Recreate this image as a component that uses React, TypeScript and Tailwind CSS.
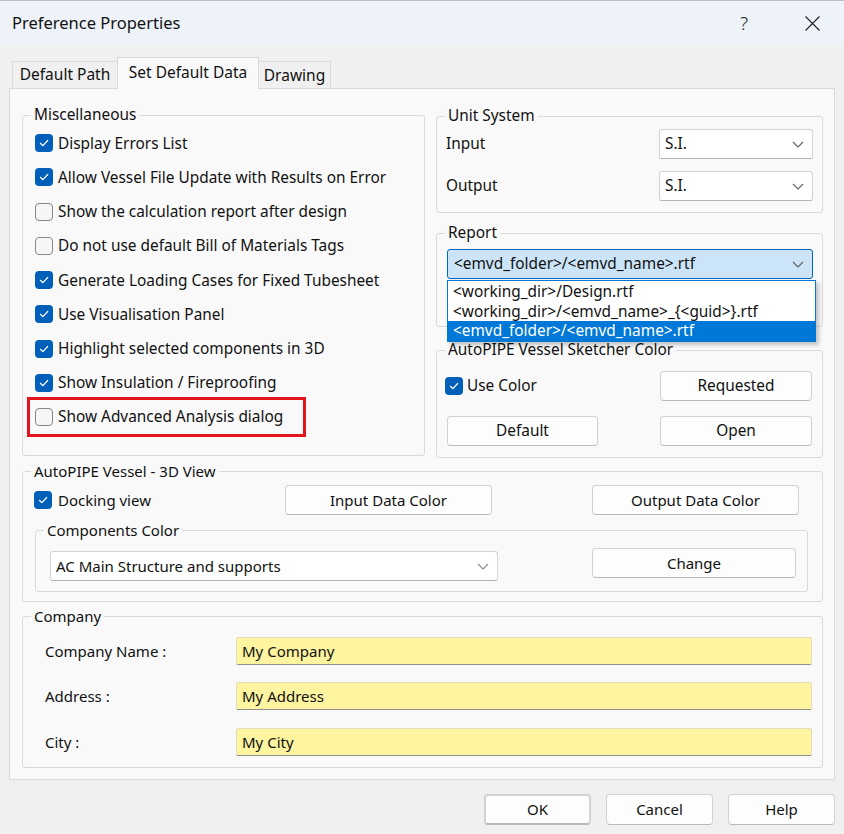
import React from "react"
import clsx from "clsx"

const MISC_OPTIONS: { label: string; checked: boolean }[] = [
  { label: "Display Errors List", checked: true },
  { label: "Allow Vessel File Update with Results on Error", checked: true },
  { label: "Show the calculation report after design", checked: false },
  { label: "Do not use default Bill of Materials Tags", checked: false },
  { label: "Generate Loading Cases for Fixed Tubesheet", checked: true },
  { label: "Use Visualisation Panel", checked: true },
  { label: "Highlight selected components in 3D", checked: true },
  { label: "Show Insulation / Fireproofing", checked: true },
]

const REPORT_OPTIONS = [
  "<working_dir>/Design.rtf",
  "<working_dir>/<emvd_name>_{<guid>}.rtf",
  "<emvd_folder>/<emvd_name>.rtf",
]

function Checkbox({ checked }: { checked: boolean }) {
  if (checked) {
    return (
      <span className="flex h-[18px] w-[18px] shrink-0 items-center justify-center rounded-[4px] bg-[#005fb8]">
        <svg width="12" height="12" viewBox="0 0 12 12">
          <path
            d="M2.4 6.3 L4.9 8.7 L9.7 3.5"
            fill="none"
            stroke="white"
            strokeWidth="1.2"
            strokeLinecap="round"
            strokeLinejoin="round"
          />
        </svg>
      </span>
    )
  }
  return <span className="h-[18px] w-[18px] shrink-0 rounded-[4px] border border-[#878787] bg-[#f6f6f6]" />
}

function Chevron({ color = "#5f5f5f" }: { color?: string }) {
  return (
    <svg width="12" height="7" viewBox="0 0 12 7" className="shrink-0">
      <polyline points="1,1 6,6 11,1" fill="none" stroke={color} strokeWidth="1.1" />
    </svg>
  )
}

function Group({
  label,
  className,
  children,
}: {
  label: string
  className?: string
  children?: React.ReactNode
}) {
  return (
    <fieldset className={clsx("rounded-[3px] border border-[#dadada]", className)}>
      <legend className="ml-[8px] px-[3px] leading-[20px]">{label}</legend>
      {children}
    </fieldset>
  )
}

function Select({ value, className, chevron }: { value: string; className?: string; chevron?: string }) {
  return (
    <div
      className={clsx(
        "flex items-center justify-between rounded-[3px] border border-[#d3d3d3] border-b-[#b3b3b3] bg-white pl-[5px] pr-[8px]",
        className
      )}
    >
      <span>{value}</span>
      <Chevron color={chevron} />
    </div>
  )
}

function Btn({ children, className }: { children: React.ReactNode; className?: string }) {
  return (
    <button
      className={clsx(
        "flex h-[30px] items-center justify-center rounded-[4px] border border-[#d2d2d2] border-b-[#b9b9b9] bg-[#fdfdfd] text-[#111]",
        className
      )}
    >
      {children}
    </button>
  )
}

function CompanyRow({ label, value, className }: { label: string; value: string; className?: string }) {
  return (
    <div className={clsx("flex items-center", className)}>
      <span className="w-[191px]">{label}</span>
      <div className="flex h-[28px] w-[576px] items-center rounded-[2px] border border-[#e3dfbd] border-b-[#8e8e8e] bg-[#fff4a0] pl-[5px]">
        {value}
      </div>
    </div>
  )
}

export default function App() {
  return (
    <div className="h-[834px] w-[844px] overflow-hidden bg-[#f0f0f0] font-['Noto_Sans',sans-serif] text-[15px] text-[#111]">
      {/* Title bar */}
      <div className="flex h-[46px] items-center border-t border-[#bdbdbd] bg-[#eef3f9] pl-[12px]">
        <span className="text-[16.5px]">Preference Properties</span>
        <span className="ml-auto mr-[57px] text-[19px] font-light text-[#1f1f1f]">?</span>
        <svg width="15" height="15" viewBox="0 0 15 15" className="mr-[24px]">
          <path d="M0.5 0.5 L14.5 14.5 M14.5 0.5 L0.5 14.5" stroke="#1f1f1f" strokeWidth="1.1" />
        </svg>
      </div>

      {/* Tabs */}
      <div className="relative z-10 flex h-[42px] items-end pl-[12px]">
        <div className="flex h-[27px] w-[106px] items-center justify-center border border-b-0 border-[#d9d9d9] bg-[#f0f0f0] text-[15.5px]">
          Default Path
        </div>
        <div className="relative z-10 -mb-px -ml-px flex h-[32px] w-[142px] justify-center border border-b-0 border-[#d9d9d9] bg-[#f9f9f9] pt-[3px] text-[15.5px] leading-[22px]">
          Set Default Data
        </div>
        <div className="-ml-px flex h-[27px] w-[73px] items-center justify-center border border-b-0 border-[#d9d9d9] bg-[#f0f0f0] pt-[2px] text-[15.5px]">
          Drawing
        </div>
      </div>

      {/* Tab panel */}
      <div className="mx-[9px] h-[692px] border border-[#d9d9d9] bg-[#f9f9f9] pt-[16px]">
        <div className="flex text-[15.4px]">
          {/* Miscellaneous */}
          <Group label="Miscellaneous" className="ml-[12px] h-[351px] w-[403px]">
            <div className="mt-px pl-[12px]">
              {MISC_OPTIONS.map((opt) => (
                <div key={opt.label} className="flex h-[34.25px] items-center gap-[5px]">
                  <Checkbox checked={opt.checked} />
                  <span>{opt.label}</span>
                </div>
              ))}
              <div className="-ml-[8px] -mt-[3px] flex h-[40px] w-[279px] items-center gap-[5px] border-[3px] border-[#e3141c] pl-[5px]">
                <Checkbox checked={false} />
                <span>Show Advanced Analysis dialog</span>
              </div>
            </div>
          </Group>

          {/* Right column */}
          <div className="ml-[11px] w-[387px]">
            <Group label="Unit System" className="mt-px h-[107px]">
              <div className="mt-[3px] flex items-center justify-between px-[9px]">
                <span>Input</span>
                <Select value="S.I." className="h-[30px] w-[154px]" />
              </div>
              <div className="mt-[12px] flex items-center justify-between px-[9px]">
                <span>Output</span>
                <Select value="S.I." className="h-[30px] w-[154px]" />
              </div>
            </Group>

            <Group label="Report" className="mt-[10px] h-[104px]">
              <div className="relative ml-[10px] mr-[9px] mt-[6px]">
                <div className="flex h-[30px] items-center justify-between rounded-[3px] border border-[#0067c0] bg-[#cce4f7] pl-[6px] pr-[8px]">
                  <span>&lt;emvd_folder&gt;/&lt;emvd_name&gt;.rtf</span>
                  <Chevron />
                </div>
                <div className="absolute left-0 top-full z-20 mt-px w-[369px] border border-[#0078d4] bg-white pt-px shadow-[3px_3px_4px_rgba(0,0,0,0.22)]">
                  {REPORT_OPTIONS.map((opt, i) => (
                    <div
                      key={opt}
                      className={clsx(
                        "h-[19.5px] pl-[5px] leading-[19.5px]",
                        i === 2 ? "bg-[#0078d7] text-white" : "text-[#111]"
                      )}
                    >
                      {opt}
                    </div>
                  ))}
                </div>
              </div>
            </Group>

            <Group label="AutoPIPE Vessel Sketcher Color" className="mt-[13px] h-[118px]">
              <div className="mt-[11px] grid grid-cols-[151px_152px] justify-between px-[10px]">
                <div className="-ml-[2px] flex items-center gap-[4px]">
                  <Checkbox checked />
                  <span>Use Color</span>
                </div>
                <Btn>Requested</Btn>
                <Btn className="mt-[15px]">Default</Btn>
                <Btn className="mt-[15px]">Open</Btn>
              </div>
            </Group>
          </div>
        </div>

        {/* 3D View */}
        <Group label="AutoPIPE Vessel - 3D View" className="ml-[12px] mt-[3px] h-[141px] w-[801px]">
          <div className="mt-[4px] flex items-center pl-[11px]">
            <div className="flex w-[251px] items-center gap-[6px]">
              <Checkbox checked />
              <span>Docking view</span>
            </div>
            <Btn className="w-[207px]">Input Data Color</Btn>
            <Btn className="ml-[100px] w-[207px]">Output Data Color</Btn>
          </div>
          <Group label="Components Color" className="ml-[12px] mt-[5px] h-[72px] w-[773px]">
            <div className="mt-[8px] flex items-start">
              <Select
                value="AC Main Structure and supports"
                chevron="#8a8a8a"
                className="ml-[14px] mt-[3px] h-[30px] w-[448px]"
              />
              <Btn className="ml-[94px] w-[204px]">Change</Btn>
            </div>
          </Group>
        </Group>

        {/* Company */}
        <Group label="Company" className="ml-[12px] mt-[4px] h-[162px] w-[801px]">
          <div className="pl-[22px]">
            <CompanyRow label="Company Name :" value="My Company" className="mt-[11px]" />
            <CompanyRow label="Address :" value="My Address" className="mt-[17px]" />
            <CompanyRow label="City :" value="My City" className="mt-[18px]" />
          </div>
        </Group>
      </div>

      {/* Dialog buttons */}
      <div className="mt-[14px] flex justify-end gap-[15px] pr-[9px]">
        <Btn className="h-[31px] w-[107px] border-2 border-[#1366c2] border-b-[#1366c2]">OK</Btn>
        <Btn className="h-[31px] w-[107px]">Cancel</Btn>
        <Btn className="h-[31px] w-[107px]">Help</Btn>
      </div>
    </div>
  )
}
